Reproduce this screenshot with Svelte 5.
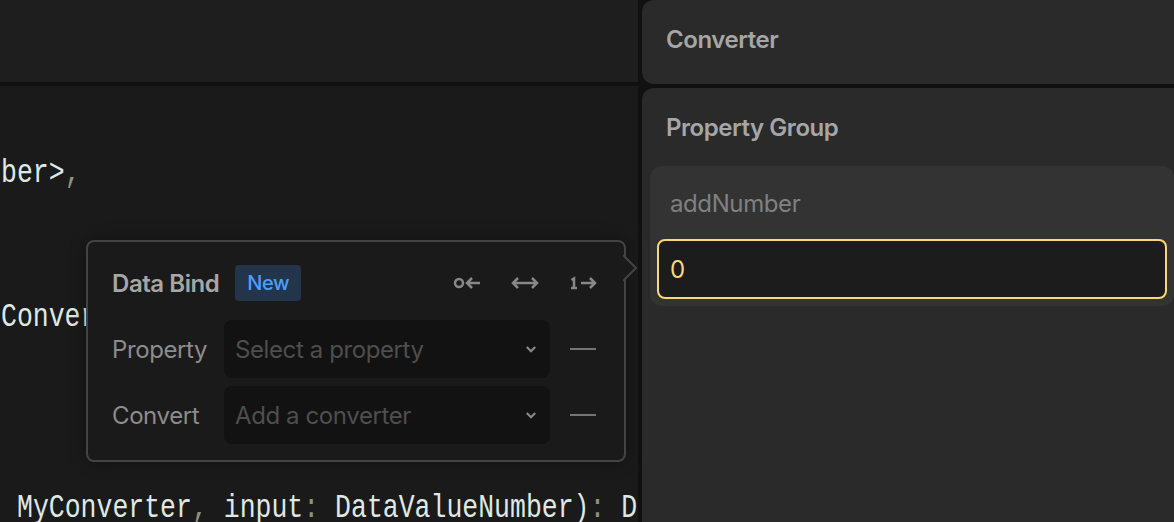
<script>
  const bindModes = ['target', 'both', 'source'];
  const rows = [
    { label: 'Property', placeholder: 'Select a property' },
    { label: 'Convert', placeholder: 'Add a converter' }
  ];
</script>

<div class="page">
  <div class="left">
    <div class="toolbar"></div>
    <div class="editor">
      <div class="line">ber&gt;<span class="punct">,</span></div>
      <div class="line"></div>
      <div class="line"></div>
      <div class="line">Conver</div>
      <div class="line"></div>
      <div class="line"></div>
      <div class="line"></div>
      <div class="line indent">MyConverter<span class="punct">,</span> input<span class="punct">:</span> DataValueNumber)<span class="punct">:</span> D</div>

      <div class="popover">
        <svg class="arrow" width="16" height="28" viewBox="0 0 16 28">
          <path d="M0 1 L13 14 L0 27" fill="#1a1a1a" stroke="#444" stroke-width="2" />
        </svg>
        <div class="pop-head">
          <span class="pop-title">Data Bind</span>
          <span class="badge">New</span>
          <div class="modes">
            {#each bindModes as mode}
              <svg width="30" height="16" viewBox="0 0 30 16" fill="none" stroke="#888" stroke-width="2.5">
                {#if mode === 'target'}
                  <circle cx="7" cy="8" r="4" />
                  <path d="M28 8 H15 M20 3 L15 8 L20 13" />
                {:else if mode === 'both'}
                  <path d="M3 8 H27 M8 3 L3 8 L8 13 M22 3 L27 8 L22 13" />
                {:else}
                  <path d="M3.5 5 L6 3.5 V13 M3 13 H9" />
                  <path d="M13 8 H27 M22 3 L27 8 L22 13" />
                {/if}
              </svg>
            {/each}
          </div>
        </div>
        {#each rows as row}
          <div class="pop-row">
            <span class="row-label">{row.label}</span>
            <div class="select">
              <span>{row.placeholder}</span>
              <svg width="10" height="7" viewBox="0 0 10 7" fill="none" stroke="#888" stroke-width="2.2">
                <path d="M0.8 1 L5 5.2 L9.2 1" />
              </svg>
            </div>
            <span class="minus"></span>
          </div>
        {/each}
      </div>
    </div>
  </div>

  <div class="right">
    <section class="panel top">
      <h2>Converter</h2>
    </section>
    <section class="panel group">
      <h2>Property Group</h2>
      <div class="field">
        <label for="add-number">addNumber</label>
        <div id="add-number" class="input">0</div>
      </div>
    </section>
  </div>
</div>

<style>
  :global(body) {
    margin: 0;
    background: #111;
  }

  .page {
    display: grid;
    grid-template-columns: 638px 1fr;
    column-gap: 4px;
    height: 522px;
    overflow: hidden;
    font-family: Inter, "Noto Sans", sans-serif;
    letter-spacing: -0.4px;
  }

  .left {
    display: flex;
    flex-direction: column;
    gap: 4px;
    min-width: 0;
  }

  .toolbar {
    height: 82px;
    background: #1e1e1e;
  }

  .editor {
    position: relative;
    flex: 1;
    background: #1a1a1a;
    padding: 64px 0 0 1px;
    font-family: "Liberation Mono", monospace;
    font-size: 26.5px;
    letter-spacing: 0;
    color: #dfe8e5;
  }

  .line {
    height: 47.9px;
    line-height: 47.9px;
    white-space: pre;
    transform: scaleY(1.25);
  }

  .indent {
    padding-left: 16px;
  }

  .punct {
    color: #8f8f82;
  }

  .popover {
    position: absolute;
    left: 86px;
    top: 154px;
    box-sizing: border-box;
    width: 540px;
    height: 222px;
    padding: 23px 28px 0 24px;
    background: #1a1a1a;
    border: 2px solid #444;
    border-radius: 8px;
    box-shadow: 0 0 16px rgba(0, 0, 0, 0.35);
    font-family: Inter, sans-serif;
    font-size: 24px;
    letter-spacing: -0.4px;
  }

  .arrow {
    position: absolute;
    right: -15px;
    top: 12px;
  }

  .pop-head {
    display: flex;
    align-items: center;
    height: 36px;
    margin-bottom: 19px;
  }

  .pop-title {
    font-weight: 560;
    letter-spacing: -0.45px;
    color: #a6a6a6;
  }

  .badge {
    margin-left: 16px;
    padding: 0 12px;
    height: 36px;
    line-height: 36px;
    box-sizing: border-box;
    border-radius: 4px;
    background: #22354a;
    color: #4a9eff;
    font-size: 20px;
    font-weight: 500;
  }

  .modes {
    display: flex;
    gap: 28px;
    margin-left: auto;
    margin-right: -2px;
  }

  .pop-row {
    display: flex;
    align-items: center;
    margin-bottom: 8px;
  }

  .row-label {
    width: 112px;
    color: #8c8c8c;
  }

  .select {
    display: flex;
    align-items: center;
    justify-content: space-between;
    box-sizing: border-box;
    width: 326px;
    height: 58px;
    padding: 0 14px 0 11px;
    border-radius: 8px;
    background: #121212;
    color: #4e4e4e;
  }

  .minus {
    width: 26px;
    height: 2px;
    margin-left: 20px;
    background: #757575;
  }

  .right {
    display: flex;
    flex-direction: column;
    gap: 4px;
  }

  .panel {
    background: #2a2a2a;
  }

  .panel h2 {
    margin: 0;
    font-size: 24px;
    font-weight: 560;
    letter-spacing: -0.45px;
    color: #a6a6a6;
  }

  .top {
    height: 84px;
    padding: 25px 24px 0;
    box-sizing: border-box;
    border-radius: 12px 0 0 12px;
  }

  .group {
    flex: 1;
    border-radius: 12px 0 0 0;
    padding: 25px 0 0 8px;
  }

  .group h2 {
    padding-left: 16px;
    margin-bottom: 24px;
  }

  .field {
    padding: 0 7px 7px 7px;
    background: #333;
    border-radius: 12px;
  }

  .field label {
    display: block;
    height: 73px;
    line-height: 76px;
    padding-left: 13px;
    font-size: 24px;
    color: #808080;
  }

  .input {
    box-sizing: border-box;
    height: 60px;
    line-height: 58px;
    padding-left: 11px;
    background: #1c1c1c;
    border: 2px solid #fbd67f;
    border-radius: 8px;
    color: #fbd67f;
    font-size: 24px;
  }
</style>
